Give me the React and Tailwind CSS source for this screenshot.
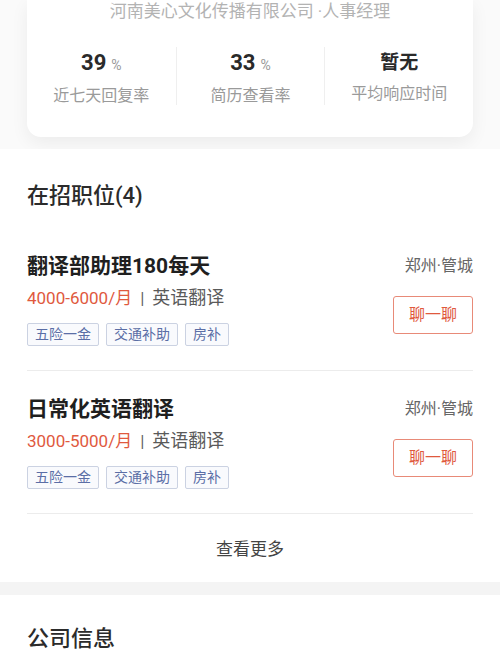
import React from 'react';

const FONT = { fontFamily: 'Roboto, "Noto Sans CJK SC", sans-serif' };

const stats = [
  { value: '39', unit: '%', label: '近七天回复率' },
  { value: '33', unit: '%', label: '简历查看率' },
  { value: '暂无', unit: '', label: '平均响应时间' },
];

const jobs = [
  { title: '翻译部助理180每天', salary: '4000-6000/月', type: '英语翻译', place: '郑州·管城' },
  { title: '日常化英语翻译', salary: '3000-5000/月', type: '英语翻译', place: '郑州·管城' },
];

const tags = ['五险一金', '交通补助', '房补'];

// one job row in the list
const JobRow = ({ job }) => (
  <div className="flex justify-between pt-[23px] pb-[24px] border-b border-[#ececec]">
    <div className="flex flex-col">
      <div className="pt-[1px] text-[21px] leading-[28px] font-bold text-[#1f1f1f]">{job.title}</div>
      <div className="mt-[6px] flex items-center leading-[24px]">
        <span className="text-[#e0593e] text-[17px]">{job.salary}</span>
        <span className="mx-[8px] text-[17px] text-[#666]">|</span>
        <span className="text-[18px] text-[#5a5a5a]">{job.type}</span>
      </div>
      <div className="mt-[13px] flex gap-[7px]">
        {tags.map((t) => (
          <span
            key={t}
            className="h-[23px] px-[7px] flex items-center text-[14px] text-[#5b6ea6] bg-[#f9fafd] border border-[#cbd2e2] rounded-[2px]"
          >
            {t}
          </span>
        ))}
      </div>
    </div>
    <div className="flex flex-col items-end">
      <div className="pt-[1px] text-[16px] leading-[28px] text-[#666]">{job.place}</div>
      <button className="mt-[16px] w-[80px] h-[38px] border border-[#e88a78] rounded-[3px] text-[16px] text-[#e0593e] bg-white">
        聊一聊
      </button>
    </div>
  </div>
);

export default function App() {
  return (
    <div className="w-[500px] h-[666px] overflow-hidden bg-white" style={FONT}>
      {/* Top: recruiter card */}
      <div className="px-[27px] bg-[#fafafa]">
        <div className="bg-white rounded-b-[14px] shadow-[0_6px_18px_rgba(0,0,0,0.06)] pb-[32px]">
          <div className="pt-[0px] text-center text-[17px] leading-[22px] text-[#b3b3b3]">
            河南美心文化传播有限公司 ·人事经理
          </div>
          <div className="mt-[25px] grid grid-cols-3">
            {stats.map((s, i) => (
              <div
                key={s.label}
                className={`h-[58px] flex flex-col items-center ${i > 0 ? 'border-l border-[#efefef]' : ''}`}
              >
                <div className="mt-[4px] leading-[24px] flex items-baseline">
                  <span className={`font-bold text-[#2a2a2a] ${s.unit ? 'text-[22px]' : 'text-[19px]'}`}>{s.value}</span>
                  {s.unit && <span className="ml-[5px] text-[14px] text-[#999]">{s.unit}</span>}
                </div>
                <div className="mt-[8px] text-[16px] leading-[22px] text-[#9a9a9a]">{s.label}</div>
              </div>
            ))}
          </div>
        </div>
        <div className="h-[12px]" />
      </div>

      {/* Jobs */}
      <div className="px-[27px] bg-white">
        <div className="pt-[32px] mb-[17px] text-[22px] leading-[30px] font-medium text-[#2b2b2b]">在招职位(4)</div>
        {jobs.map((j) => (
          <JobRow key={j.title} job={j} />
        ))}
        <div className="pt-[23px] pb-[21px] text-center text-[17px] leading-[24px] text-[#444]">查看更多</div>
      </div>

      <div className="h-[13px] bg-[#f4f4f4]" />

      {/* Company info */}
      <div className="px-[27px] pt-[29px] bg-white">
        <div className="text-[22px] leading-[30px] font-medium text-[#2b2b2b]">公司信息</div>
      </div>
    </div>
  );
}
